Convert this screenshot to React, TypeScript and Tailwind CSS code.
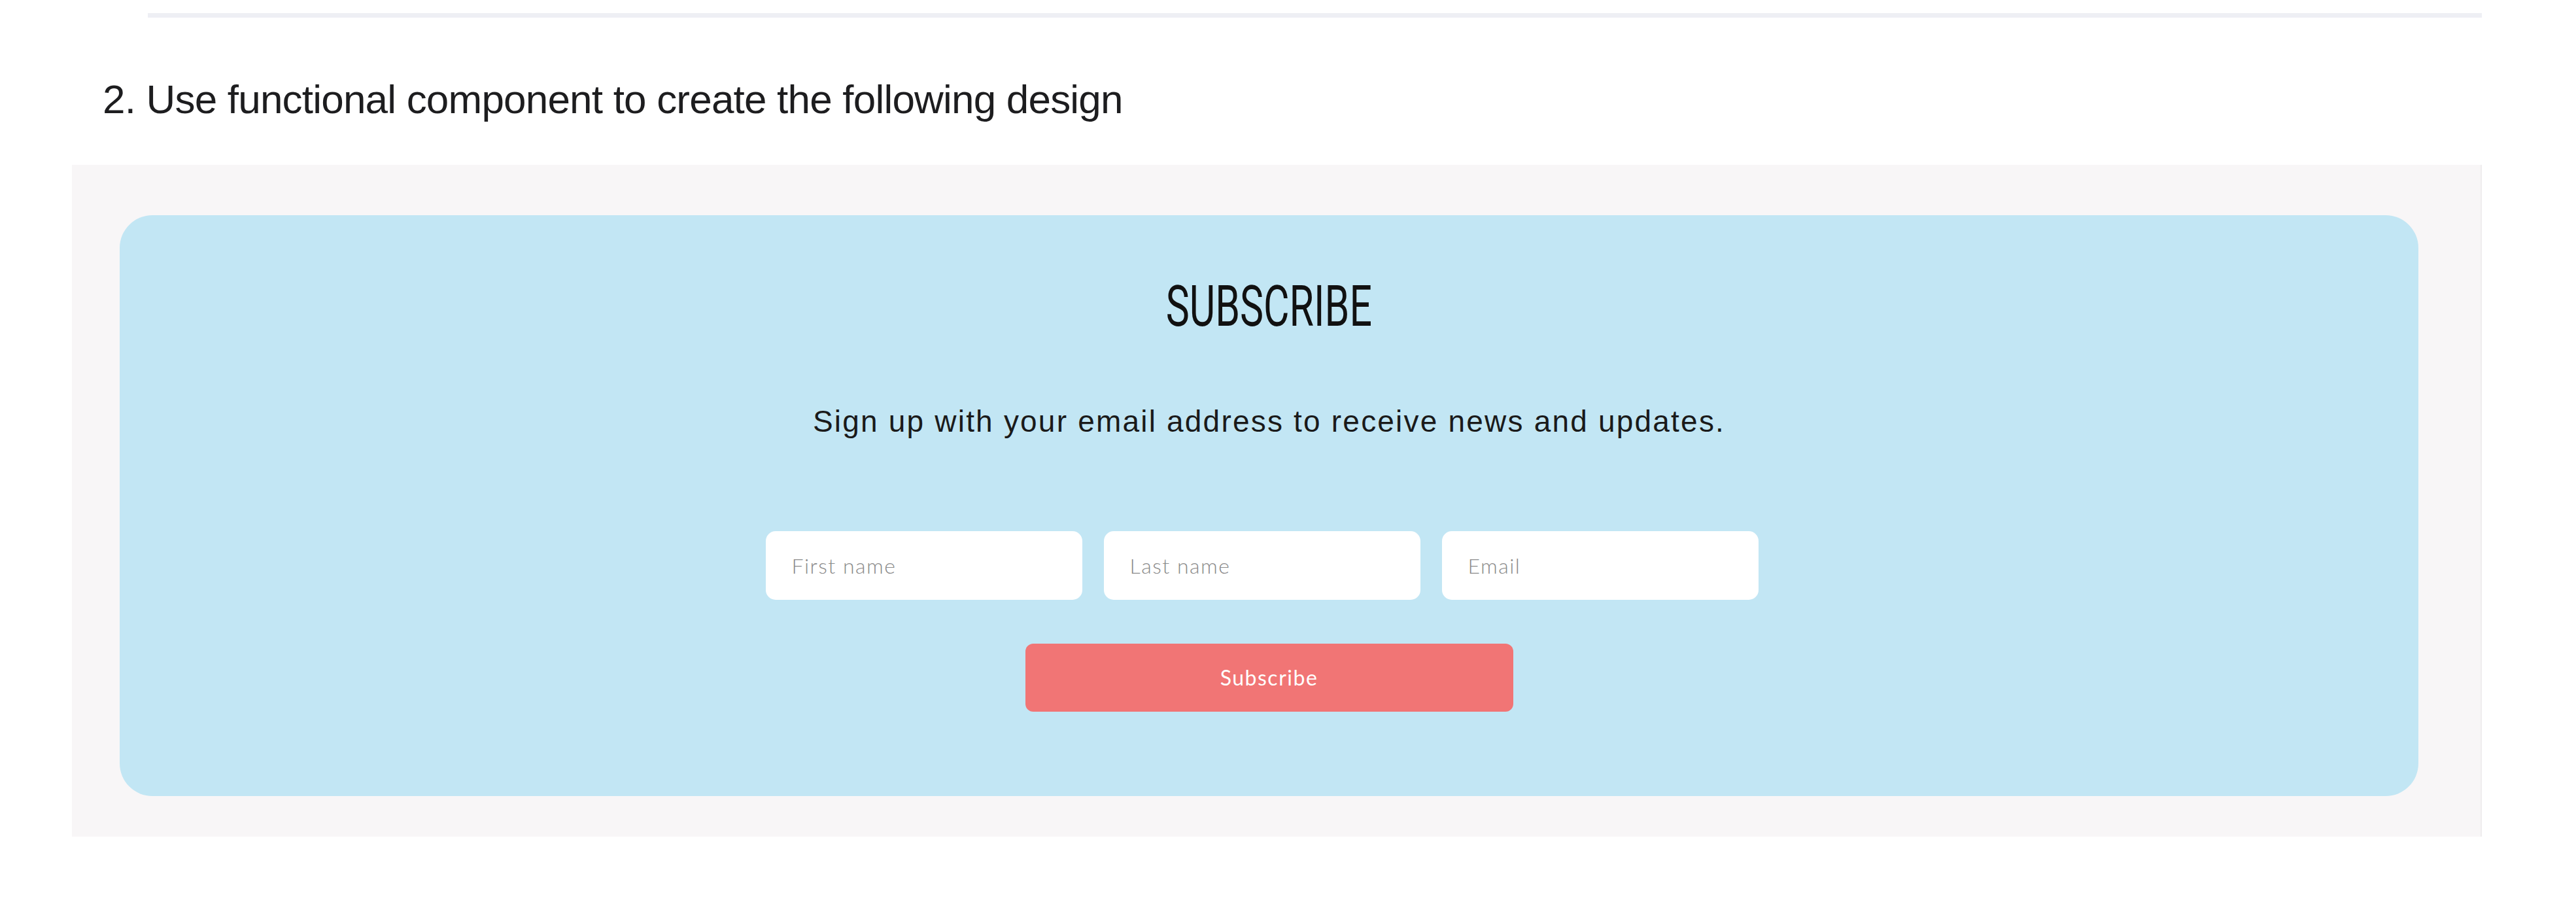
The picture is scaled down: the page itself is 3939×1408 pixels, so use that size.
import React from "react";

export default function App() {
  return (
    <div className="w-[3939px] h-[1408px] bg-white overflow-hidden" style={{ fontFamily: '"Liberation Sans", Arial, sans-serif' }}>
      <div className="pt-[20px] pl-[226px] w-[3795px]">
        <div className="h-[7px] bg-[#eeeff4]" />
      </div>
      <h2
        className="mt-[94px] ml-[157px] text-[62px] leading-none font-normal text-[#1d1d1f] tracking-[-0.8px]"
        style={{ fontFamily: '"Liberation Sans", Arial, sans-serif' }}
      >
        2. Use functional component to create the following design
      </h2>
      <div className="mt-[69px] ml-[110px] w-[3685px] h-[1027px] bg-[#f8f6f7] border-r-2 border-[#eeeced] pt-[77px] pl-[73px]">
        <div className="w-[3515px] h-[888px] rounded-[50px] bg-[#c2e6f4] flex flex-col items-center pt-[95px]">
          <h1
            className="text-[88px] leading-none font-normal text-[#111] scale-x-[0.69]"
            style={{ fontFamily: 'Roboto, sans-serif' }}
          >
            SUBSCRIBE
          </h1>
          <p className="mt-[109px] text-[46px] leading-none text-[#1a1a1a] tracking-[2.2px]">
            Sign up with your email address to receive news and updates.
          </p>
          <div className="mt-[145px] flex gap-[33px] pr-[22px]">
            {["First name", "Last name", "Email"].map((p) => (
              <input
                key={p}
                placeholder={p}
                className="w-[484px] h-[105px] rounded-[15px] bg-white pl-[40px] text-[32px] font-light tracking-[1.5px] placeholder:text-[#8a8a8a] outline-none"
                style={{ fontFamily: 'Lato, "Liberation Sans", sans-serif' }}
              />
            ))}
          </div>
          <button
            className="mt-[67px] w-[746px] h-[104px] rounded-[12px] bg-[#f17575] text-white text-[32px] tracking-[1.5px]"
            style={{ fontFamily: 'Lato, "Liberation Sans", sans-serif' }}
          >
            Subscribe
          </button>
        </div>
      </div>
    </div>
  );
}
